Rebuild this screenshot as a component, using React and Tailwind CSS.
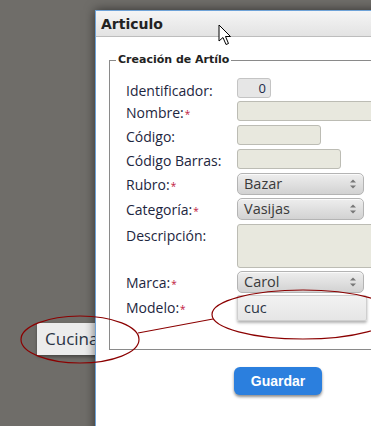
import React from 'react';

const font = { fontFamily: '"Open Sans", "DejaVu Sans", sans-serif' };

const Req = () => <span className="text-[#c0143c] text-[10px] align-top relative top-[1px] ml-[1px]">*</span>;

const Arrows = () => (
  <svg width="8" height="12" viewBox="0 0 8 12" className="absolute right-[6px] top-1/2 -translate-y-1/2">
    <path d="M1 4.5 L4 1.5 L7 4.5 Z" fill="#777" />
    <path d="M1 7.5 L4 10.5 L7 7.5 Z" fill="#777" />
  </svg>
);

const Row = ({ label, req, className = '', labelClass = 'top-[2px]', children }) => (
  <div className={`flex items-start ${className}`}>
    <div className={`relative w-[111px] shrink-0 text-[14px] text-[#1d2640] leading-[20px] ${labelClass}`}>
      {label}
      {req && <Req />}
    </div>
    {children}
  </div>
);

const Select = ({ value, className = '' }) => (
  <div className={`relative h-[22px] w-[127px] rounded-[5px] border border-[#b4b4b4] bg-gradient-to-b from-[#eeeeee] to-[#d2d2d2] shadow-[inset_0_1px_0_#fafafa] pl-[6px] text-[14.5px] leading-[20px] text-[#3a3a3a] ${className}`}>
    {value}
    <Arrows />
  </div>
);

const Field = ({ className = '', children }) => (
  <div className={`h-[20px] rounded-[3px] border border-[#bcbcb4] bg-[#e8e8de] ${className}`}>{children}</div>
);

export default function App() {
  return (
    <div className="relative w-[371px] h-[426px] overflow-hidden bg-[#6f6d69]" style={font}>
      {/* autocomplete suggestion */}
      <div className="absolute left-[37px] top-[323px] w-[80px] h-[32px] bg-[#ececec] shadow-[0_2px_3px_rgba(0,0,0,0.35)] pl-[8px] text-[17px] leading-[32px] text-[#2a3445]">
        Cucina
      </div>

      {/* dialog */}
      <div className="absolute left-[95px] top-[10px] w-[320px] h-[430px] bg-white border border-[#6fa3d8] shadow-[0_0_10px_rgba(0,0,0,0.55)]">
        <div className="h-[26px] bg-gradient-to-b from-[#f5f5f5] to-[#e3e3e3] border-b border-[#bdbdbd] pl-[5px] text-[14px] font-bold leading-[26px] text-[#222]" style={{ fontFamily: '"DejaVu Sans", sans-serif' }}>
          Articulo
        </div>

        <fieldset className="ml-[13px] mt-[16px] border border-[#8a8a8a] pl-[16px] pr-0 pt-[11px] pb-[28px]">
          <legend className="ml-[-10px] px-[2px] text-[11px] font-bold leading-[14px] text-[#222]" style={{ fontFamily: '"DejaVu Sans", sans-serif' }}>
            Creación de Artílo
          </legend>

          <Row label="Identificador:" labelClass="top-[3px]">
            <div className="h-[20px] w-[34px] rounded-[3px] border border-[#c4c4c4] bg-[#e6e6e6] pr-[4px] text-right text-[13px] leading-[18px] text-[#1d2a4a]">0</div>
          </Row>
          <Row label="Nombre:" req className="mt-[3px]">
            <Field className="w-[180px]" />
          </Row>
          <Row label="Código:" className="mt-[4px]">
            <Field className="w-[84px]" />
          </Row>
          <Row label="Código Barras:" className="mt-[4px]">
            <Field className="w-[104px]" />
          </Row>
          <Row label="Rubro:" req className="mt-[4px]">
            <Select value="Bazar" />
          </Row>
          <Row label="Categoría:" req className="mt-[3px]">
            <Select value="Vasijas" />
          </Row>
          <Row label="Descripción:" className="mt-[4px]">
            <Field className="w-[180px] !h-[44px]" />
          </Row>
          <Row label="Marca:" req className="mt-[3px]">
            <Select value="Carol" />
          </Row>
          <Row label="Modelo:" req className="mt-[2px]" labelClass="top-[3px]">
            <div className="h-[26px] w-[130px] rounded-[2px] border border-[#cfcfcf] bg-gradient-to-b from-[#f2f2f2] to-[#e6e6e6] shadow-[0_2px_3px_rgba(0,0,0,0.3)] pl-[6px] text-[14.5px] leading-[24px] text-[#2a3445]">
              cuc
            </div>
          </Row>
        </fieldset>

        <button className="ml-[138px] mt-[17px] h-[28px] w-[88px] rounded-[6px] bg-[#2b7fde] text-[14px] font-bold text-white shadow-[0_2px_3px_rgba(0,0,0,0.45)]" style={{ fontFamily: '"Liberation Sans", sans-serif' }}>
          Guardar
        </button>
      </div>

      {/* annotation + cursor */}
      <svg className="absolute left-0 top-0 pointer-events-none" width="371" height="426" viewBox="0 0 371 426">
        <ellipse cx="80" cy="339.5" rx="59" ry="23.5" fill="none" stroke="#8b0000" strokeWidth="1.2" />
        <ellipse cx="303" cy="314.5" rx="91" ry="24.5" fill="none" stroke="#8b0000" strokeWidth="1.2" />
        <path d="M138 333 L213 319" stroke="#8b0000" strokeWidth="1.2" />
        <path d="M219 25 L219 41 L223 37.5 L226 44.5 L228.5 43.5 L225.5 36.5 L230.5 36.5 Z" fill="#fff" stroke="#000" strokeWidth="1" strokeLinejoin="round" />
      </svg>
    </div>
  );
}
